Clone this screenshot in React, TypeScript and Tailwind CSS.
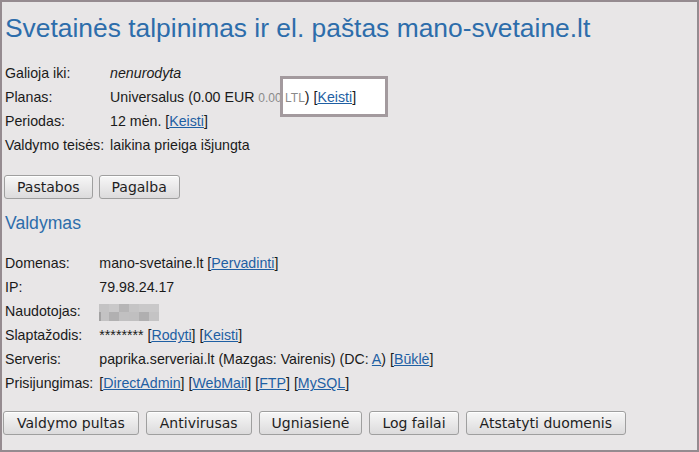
import React from "react";

const btn =
  "h-6 border border-[#9f9f9f] rounded-[3px] bg-gradient-to-b from-[#f7f7f7] to-[#dcdbdc] text-[14px] leading-4 text-[#1e1e1e] font-['DejaVu_Sans',sans-serif] shadow-[inset_0_1px_0_#ffffff]";

function L({ children }: { children: React.ReactNode }) {
  return (
    <>
      [<a href="#" className="text-[#1f5fa3] underline">{children}</a>]
    </>
  );
}

function Blur() {
  const top = ["#c4c3c4", "#c9c8c9", "#b6b5b6", "#c5c4c5", "#c9c8c9", "#c9c8c9"];
  const bottom = ["#c3c2c3", "#b1b0b1", "#c1c0c1", "#c0bfc0", "#b0afb0", "#c4c3c4"];
  return (
    <div className="flex flex-col">
      <div className="flex h-[8px]">
        {top.map((c, i) => (
          <div key={i} className="w-[10px]" style={{ background: c }} />
        ))}
      </div>
      <div className="flex h-[9px]">
        <div className="w-[2px] bg-[#a2a1a2]" />
        {bottom.map((c, i) => (
          <div key={i} className={i === 0 ? "w-[8px]" : "w-[10px]"} style={{ background: c }} />
        ))}
      </div>
    </div>
  );
}

export default function App() {
  const row = "contents";
  return (
    <div className="w-[699px] h-[452px] border-2 border-[#958b90] bg-[#e8e6e7] px-[3px] pt-[11px] font-['Liberation_Sans',Arial,sans-serif] text-[14.2px] text-[#1a1a1a] relative">
      <h1 className="text-[26.4px] leading-[30px] text-[#2d6dab]">
        Svetainės talpinimas ir el. paštas mano-svetaine.lt
      </h1>

      <div className="mt-[19px] grid grid-cols-[auto_1fr] gap-x-[6px] auto-rows-[24px] items-center">
        <div className={row}>
          <div>Galioja iki:</div>
          <div className="italic">nenurodyta</div>
        </div>
        <div className={row}>
          <div>Planas:</div>
          <div>
            Universalus (0.00 EUR{" "}
            <span className="relative z-10">
              <span className="text-[12px] text-[#8a8a8a]">0.00 LTL</span>) <L>Keisti</L>
            </span>
          </div>
        </div>
        <div className={row}>
          <div>Periodas:</div>
          <div>
            12 mėn. <L>Keisti</L>
          </div>
        </div>
        <div className={row}>
          <div>Valdymo teisės:</div>
          <div>laikina prieiga išjungta</div>
        </div>
      </div>

      {/* highlight callout */}
      <div className="absolute left-[278px] top-[74px] w-[108px] h-[41px] bg-white" />
      <div className="absolute left-[278px] top-[74px] w-[108px] h-[41px] border-[3px] border-[#a39a9e] z-20" />

      <div className="mt-[17px] flex gap-[6px] -ml-px">
        <button className={btn + " px-[12px]"}>Pastabos</button>
        <button className={btn + " px-[12px]"}>Pagalba</button>
      </div>

      <h2 className="mt-[12px] text-[17.6px] leading-6 text-[#2d6dab]">Valdymas</h2>

      <div className="mt-[17px] grid grid-cols-[auto_1fr] gap-x-[6px] auto-rows-[24px] items-center">
        <div className={row}>
          <div>Domenas:</div>
          <div>
            mano-svetaine.lt <L>Pervadinti</L>
          </div>
        </div>
        <div className={row}>
          <div>IP:</div>
          <div>79.98.24.17</div>
        </div>
        <div className={row}>
          <div>Naudotojas:</div>
          <div className="flex items-center">
            <Blur />
          </div>
        </div>
        <div className={row}>
          <div>Slaptažodis:</div>
          <div>
            ******** <L>Rodyti</L> <L>Keisti</L>
          </div>
        </div>
        <div className={row}>
          <div>Serveris:</div>
          <div>
            paprika.serveriai.lt (Mazgas: Vairenis) (DC:{" "}
            <a href="#" className="text-[#1f5fa3] underline">A</a>) <L>Būklė</L>
          </div>
        </div>
        <div className={row}>
          <div>Prisijungimas:</div>
          <div>
            <L>DirectAdmin</L> <L>WebMail</L> <L>FTP</L> <L>MySQL</L>
          </div>
        </div>
      </div>

      <div className="mt-[15px] flex gap-[7px] -ml-[2px]">
        <button className={btn + " px-[13px]"}>Valdymo pultas</button>
        <button className={btn + " px-[13px]"}>Antivirusas</button>
        <button className={btn + " px-[12px]"}>Ugniasienė</button>
        <button className={btn + " px-[12px]"}>Log failai</button>
        <button className={btn + " px-[13px]"}>Atstatyti duomenis</button>
      </div>
    </div>
  );
}
